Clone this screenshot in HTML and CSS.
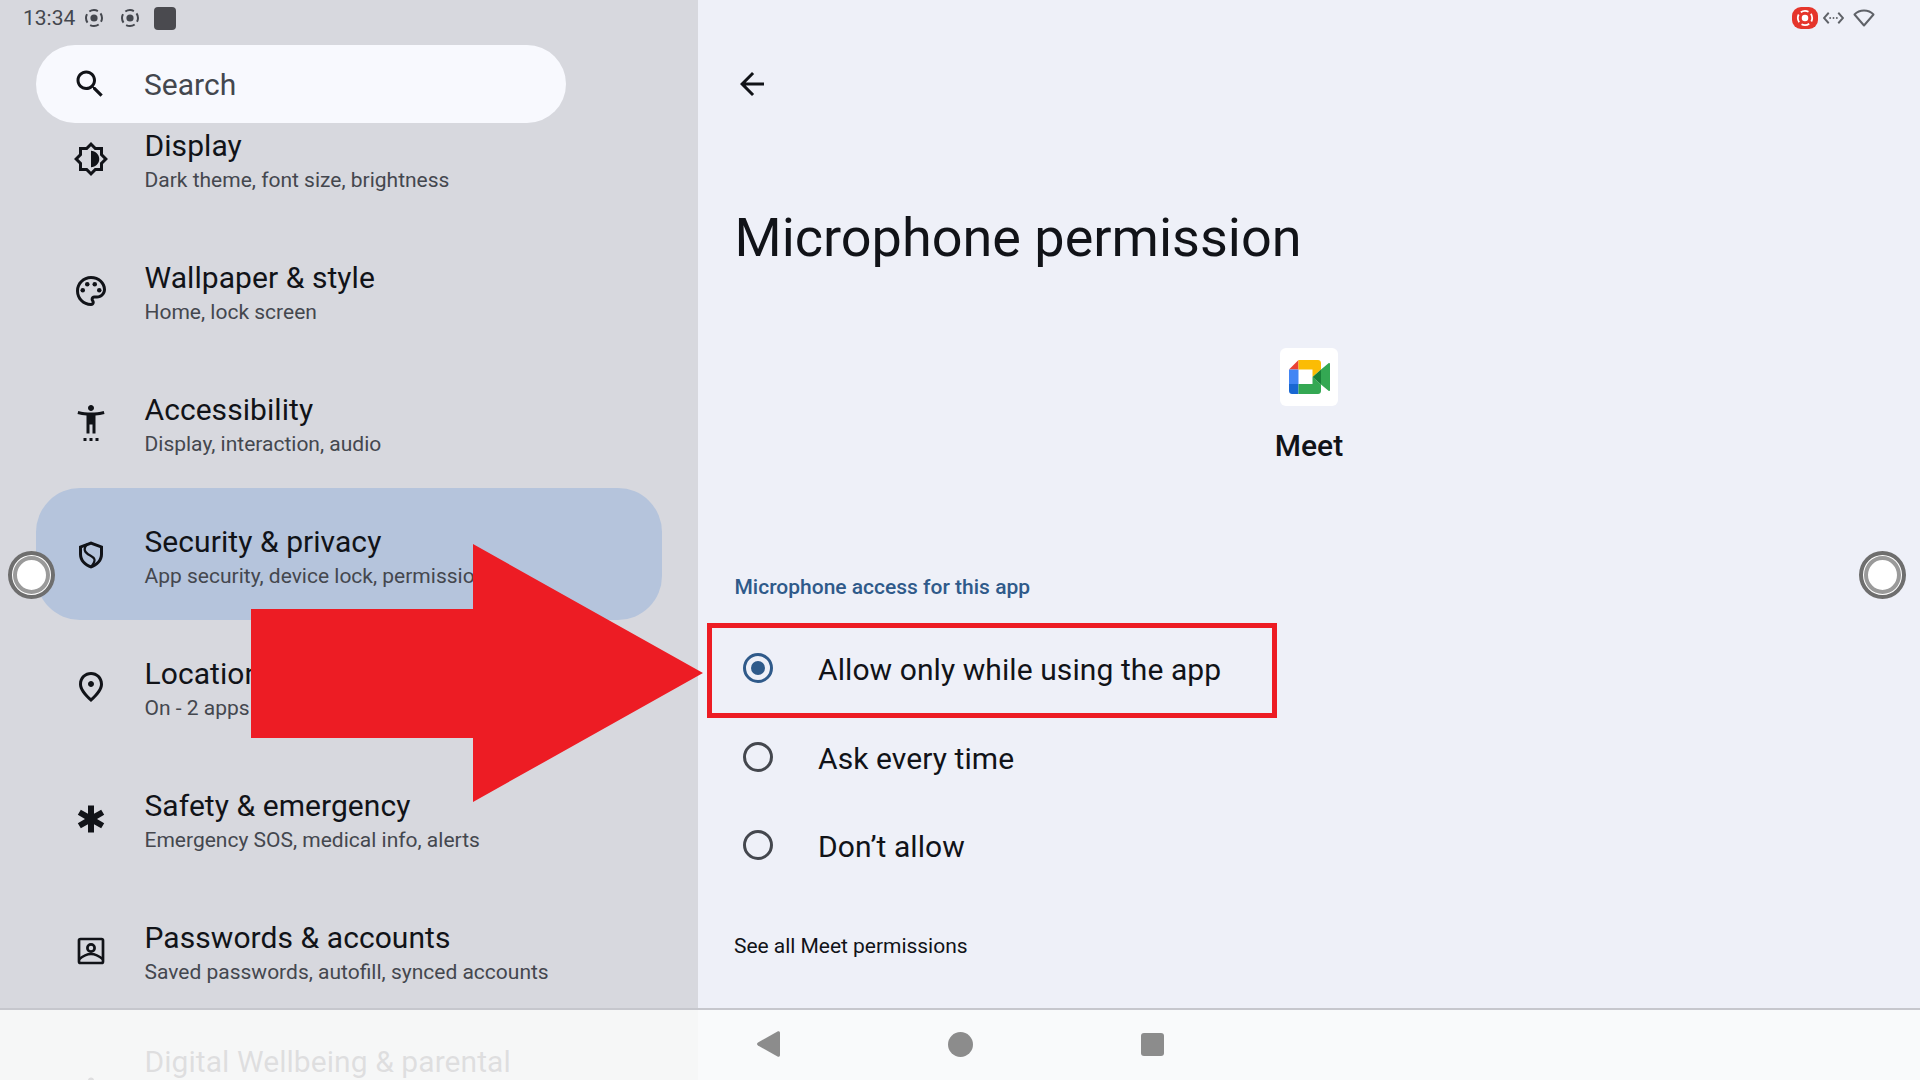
FILE: index.html
```html
<!DOCTYPE html>
<html lang="en">
<head>
    <meta charset="UTF-8">
    <title>Microphone permission</title>
    <link rel="stylesheet" href="styles.css">
</head>
<body>
<div class="screen">

    <!-- Left pane: settings list -->
    <div class="left-pane">
        <div class="status-left">
            <span class="clock">13:34</span>
            <svg class="rec-icon" viewBox="0 0 20 20"><circle cx="10" cy="10" r="3.6"/><circle class="rec-ring" cx="10" cy="10" r="8"/></svg>
            <svg class="rec-icon second" viewBox="0 0 20 20"><circle cx="10" cy="10" r="3.6"/><circle class="rec-ring" cx="10" cy="10" r="8"/></svg>
            <span class="stop-icon"></span>
        </div>

        <div class="search">
            <svg class="icon" viewBox="0 0 24 24"><path d="M15.5 14h-.79l-.28-.27C15.41 12.59 16 11.11 16 9.5 16 5.91 13.09 3 9.5 3S3 5.91 3 9.5 5.91 16 9.5 16c1.61 0 3.09-.59 4.23-1.57l.27.28v.79l5 4.99L20.49 19l-4.99-5zm-6 0C7.01 14 5 11.99 5 9.5S7.01 5 9.5 5 14 7.01 14 9.5 11.99 14 9.5 14z"/></svg>
            <span class="search-text">Search</span>
        </div>

        <div class="list">
            <div class="row">
                <svg class="icon" viewBox="0 0 24 24"><path d="M20 8.69V4h-4.69L12 .69 8.69 4H4v4.69L.69 12 4 15.31V20h4.69L12 23.31 15.31 20H20v-4.69L23.31 12 20 8.69zm-2 5.79V18h-3.52L12 20.48 9.52 18H6v-3.52L3.52 12 6 9.52V6h3.52L12 3.52 14.48 6H18v3.52L20.48 12 18 14.48zM12 6.5v11c3.03 0 5.5-2.47 5.5-5.5S15.03 6.5 12 6.5z"/></svg>
                <div class="row-text">
                    <div class="row-title">Display</div>
                    <div class="row-sub">Dark theme, font size, brightness</div>
                </div>
            </div>
            <div class="row">
                <svg class="icon" viewBox="0 0 24 24"><path d="M12 22C6.49 22 2 17.51 2 12S6.49 2 12 2s10 4.04 10 9c0 3.31-2.69 6-6 6h-1.77c-.28 0-.5.22-.5.5 0 .12.05.23.13.33.41.47.64 1.06.64 1.67 0 1.38-1.12 2.5-2.5 2.5zm0-18c-4.41 0-8 3.59-8 8s3.59 8 8 8c.28 0 .5-.22.5-.5 0-.16-.08-.28-.14-.35-.41-.46-.63-1.05-.63-1.65 0-1.38 1.12-2.5 2.5-2.5H16c2.21 0 4-1.79 4-4 0-3.86-3.59-7-8-7z"/><circle cx="6.5" cy="11.5" r="1.5"/><circle cx="9.5" cy="7.5" r="1.5"/><circle cx="14.5" cy="7.5" r="1.5"/><circle cx="17.5" cy="11.5" r="1.5"/></svg>
                <div class="row-text">
                    <div class="row-title">Wallpaper &amp; style</div>
                    <div class="row-sub">Home, lock screen</div>
                </div>
            </div>
            <div class="row">
                <svg class="icon" viewBox="0 0 24 24"><path d="M20.5 4c-2.61.7-5.67 1-8.5 1s-5.89-.3-8.5-1L3 6c1.86.5 4 .83 6 1v12h2v-6h2v6h2V7c2-.17 4.14-.5 6-1l-.5-2zM12 4c1.1 0 2-.9 2-2s-.9-2-2-2-2 .9-2 2 .9 2 2 2zM7 24h2v-2H7v2zm4 0h2v-2h-2v2zm4 0h2v-2h-2v2z"/></svg>
                <div class="row-text">
                    <div class="row-title">Accessibility</div>
                    <div class="row-sub">Display, interaction, audio</div>
                </div>
            </div>
            <div class="row selected">
                <svg class="icon" viewBox="0 0 24 24"><path d="M12 3 4 6v5.5c0 4.5 3.4 8 8 9.5 4.6-1.5 8-5 8-9.5V6l-8-3zm6 8.5c0 3.4-2.5 6-6 7.4-3.5-1.4-6-4-6-7.4V7.4l6-2.25 6 2.25v4.1z"/><path class="shield-line" d="M10 4.5C7 7 7 9.5 10 11.5c3 2 7 2.5 2 8.5"/></svg>
                <div class="row-text">
                    <div class="row-title">Security &amp; privacy</div>
                    <div class="row-sub">App security, device lock, permissions</div>
                </div>
            </div>
            <div class="row">
                <svg class="icon" viewBox="0 0 24 24"><path d="M12 12c-1.1 0-2-.9-2-2s.9-2 2-2 2 .9 2 2-.9 2-2 2zm6-1.8C18 6.57 15.35 4 12 4s-6 2.57-6 6.2c0 2.34 1.95 5.44 6 9.14 4.05-3.7 6-6.8 6-9.14zM12 2c4.2 0 8 3.22 8 8.2 0 3.32-2.67 7.25-8 11.8-5.33-4.55-8-8.48-8-11.8C4 5.22 7.8 2 12 2z"/></svg>
                <div class="row-text">
                    <div class="row-title">Location</div>
                    <div class="row-sub">On - 2 apps have access</div>
                </div>
            </div>
            <div class="row">
                <svg class="icon" viewBox="0 0 24 24"><path d="M20.79 9.23l-2-3.46L14 8.54V3h-4v5.54L5.21 5.77l-2 3.46L8 12l-4.79 2.77 2 3.46L10 15.46V21h4v-5.54l4.79 2.77 2-3.46L16 12z"/></svg>
                <div class="row-text">
                    <div class="row-title">Safety &amp; emergency</div>
                    <div class="row-sub">Emergency SOS, medical info, alerts</div>
                </div>
            </div>
            <div class="row">
                <svg class="icon icon-line" viewBox="0 0 24 24"><rect x="4" y="4" width="16" height="16" rx="1"/><circle cx="12" cy="10" r="2.4"/><path d="M4 17.5C7 15 9.5 14 12 14s5 1 8 3.5"/></svg>
                <div class="row-text">
                    <div class="row-title">Passwords &amp; accounts</div>
                    <div class="row-sub">Saved passwords, autofill, synced accounts</div>
                </div>
            </div>
            <div class="row last">
                <svg class="icon" viewBox="0 0 24 24"><circle cx="12" cy="11" r="2"/><path d="M6 21c0-4 2.7-6 6-6s6 2 6 6h-2c0-2.5-1.7-4-4-4s-4 1.5-4 4H6z"/></svg>
                <div class="row-text">
                    <div class="row-title">Digital Wellbeing &amp; parental</div>
                </div>
            </div>
        </div>
    </div>

    <!-- Right pane: permission page -->
    <div class="right-pane">
        <div class="status-right">
            <span class="rec-pill">
                <svg viewBox="0 0 20 20"><circle cx="10" cy="10" r="3.6"/><circle class="rec-ring" cx="10" cy="10" r="8"/></svg>
            </span>
            <svg class="data-icon" viewBox="0 0 22 14"><path d="M6 1.5 1 7l5 5.5M16 1.5 21 7l-5 5.5"/><circle cx="7.5" cy="7" r="1"/><circle cx="11" cy="7" r="1"/><circle cx="14.5" cy="7" r="1"/></svg>
            <svg class="wifi-icon" viewBox="0 0 22 18"><path d="M1.5 5.5C4 2.8 7.3 1.5 11 1.5s7 1.3 9.500 4L11 16.5z"/></svg>
        </div>

        <svg class="back-icon" viewBox="0 0 24 24"><path d="M20 11H7.83l5.59-5.59L12 4l-8 8 8 8 1.41-1.41L7.83 13H20v-2z"/></svg>

        <h1 class="page-title">Microphone permission</h1>

        <div class="app-info">
            <div class="app-tile">
                <svg class="meet-logo" viewBox="0 0 41 34">
                    <path fill="#ea4335" d="M9.5 0 0 9.5h9.5z"/>
                    <path fill="#4285f4" d="M0 9.5h9.5V24H0z"/>
                    <path fill="#1967d2" d="M0 24h9.5v10H3c-1.7 0-3-1.3-3-3z"/>
                    <path fill="#fbbc04" d="M9.5 0H29c1.7 0 3 1.3 3 3v6.5l-8.5 7.5V9.5h-14z"/>
                    <path fill="#34a853" d="M9.5 24h14v-7l8.5 7.5V31c0 1.7-1.3 3-3 3H9.5z"/>
                    <path fill="#188038" d="M23.5 17 32 9.5v15z"/>
                    <path fill="#34a853" d="M32 9.5 39.5 3.2c.7-.6 1.5-.2 1.5.8v26c0 1-.8 1.4-1.5.8L32 24.5z"/>
                </svg>
            </div>
            <div class="app-name">Meet</div>
        </div>

        <div class="section-label">Microphone access for this app</div>

        <div class="options">
            <div class="option">
                <span class="radio checked"></span>
                <span class="option-text">Allow only while using the app</span>
            </div>
            <div class="option">
                <span class="radio"></span>
                <span class="option-text">Ask every time</span>
            </div>
            <div class="option">
                <span class="radio"></span>
                <span class="option-text">Don’t allow</span>
            </div>
        </div>

        <div class="see-all">See all Meet permissions</div>
    </div>

    <!-- Navigation bar, lies over the list -->
    <div class="nav-bar">
        <svg class="nav-back" viewBox="0 0 23 26"><path d="M20.5.5c1.3-.7 2.5 0 2.5 1.5v22c0 1.5-1.2 2.2-2.5 1.5L1 14.5c-1.3-.8-1.3-2.2 0-3z"/></svg>
        <span class="nav-home"></span>
        <span class="nav-recent"></span>
    </div>

    <!-- Split screen handles -->
    <div class="handle handle-left"></div>
    <div class="handle handle-right"></div>

    <!-- Annotations drawn on the screenshot -->
    <svg class="arrow" viewBox="0 0 452 258"><path d="M0 65H222V0L452 129 222 258V194H0z"/></svg>
    <div class="red-box"></div>
</div>
</body>
</html>
```

FILE: styles.css
```css
* {
    margin: 0;
    padding: 0;
    box-sizing: border-box;
    font-family: 'Roboto', sans-serif;
}

body {
    width: 1920px;
    height: 1080px;
    overflow: hidden;
}

.screen {
    position: relative;
    display: flex;
    width: 1920px;
    height: 1080px;
    overflow: hidden;
    color: #111318;
}

.icon {
    flex: none;
    width: 36px;
    height: 36px;
    fill: #111318;
}

.icon-line {
    fill: none;
    stroke: #111318;
    stroke-width: 1.8;
}

/* Left pane */
.left-pane {
    flex: none;
    display: flex;
    flex-direction: column;
    width: 698px;
    height: 1080px;
    overflow: hidden;
    background-color: #d7d8de;
}

.status-left {
    flex: none;
    display: flex;
    align-items: center;
    height: 36px;
    padding-left: 23px;
    color: #44474e;
}

.clock {
    font-size: 21px;
}

.rec-icon {
    width: 20px;
    height: 20px;
    margin-left: 9px;
    fill: #44474e;
}

.rec-icon.second {
    margin-left: 16px;
}

.rec-ring {
    fill: none;
    stroke: #44474e;
    stroke-width: 2;
    stroke-dasharray: 9 3.5;
    stroke-dashoffset: 5;
}

.stop-icon {
    width: 22px;
    height: 23px;
    margin-left: 14px;
    border-radius: 4px;
    background-color: #4a4a4f;
}

.search {
    position: relative;
    z-index: 1;
    flex: none;
    display: flex;
    align-items: center;
    gap: 36px;
    width: 530px;
    height: 78px;
    margin: 9px 0 0 36px;
    padding-left: 36px;
    border-radius: 39px;
    background-color: #f8f9fe;
}

.search-text {
    font-size: 30px;
    color: #44474e;
}

.list {
    flex: none;
    margin-top: -31px;
}

.row {
    display: flex;
    align-items: center;
    gap: 36px;
    width: 626px;
    height: 132px;
    margin-left: 36px;
    padding-left: 36px;
    border-radius: 44px;
    white-space: nowrap;
}

.row > .icon {
    margin: 2px 0 0 0.5px;
}

.row-text {
    margin-top: 6px;
}

.row.selected {
    background-color: #b5c4dc;
}

/* Only the first line of this row shows above the navigation bar */
.row.last {
    height: 86px;
}

.row.last > .icon {
    align-self: flex-start;
    margin-top: 48px;
}

.shield-line {
    fill: none;
    stroke: #111318;
    stroke-width: 1.5;
}

.row-title {
    font-size: 30px;
    line-height: 36px;
    letter-spacing: 0.06px;
}

.row-sub {
    margin-top: 1px;
    font-size: 21px;
    line-height: 30px;
    color: #44474e;
}

/* Right pane */
.right-pane {
    flex: 1;
    height: 1080px;
    background-color: #eef0f8;
}

.status-right {
    display: flex;
    justify-content: flex-end;
    align-items: center;
    height: 36px;
    padding-right: 45px;
}

.rec-pill {
    display: flex;
    align-items: center;
    justify-content: center;
    width: 26px;
    height: 22px;
    border-radius: 9px;
    background-color: #e5352b;
}

.rec-pill svg {
    width: 18px;
    height: 18px;
    fill: #fff;
}

.rec-pill .rec-ring {
    stroke: #fff;
}

.data-icon {
    width: 21px;
    height: 14px;
    margin-left: 5px;
    fill: #5f6268;
    stroke: #5f6268;
}

.data-icon path {
    fill: none;
    stroke-width: 2;
}

.data-icon circle {
    stroke: none;
}

.wifi-icon {
    width: 22px;
    height: 18px;
    margin-left: 9px;
    fill: none;
    stroke: #5f6268;
    stroke-width: 2;
    stroke-linejoin: round;
}

.back-icon {
    display: block;
    width: 36px;
    height: 36px;
    margin: 30px 0 0 36px;
    fill: #111318;
}

.page-title {
    margin: 104px 0 0 36.5px;
    font-size: 54px;
    font-weight: 400;
    line-height: 64px;
}

.app-info {
    display: flex;
    flex-direction: column;
    align-items: center;
    margin-top: 78px;
}

.app-tile {
    display: flex;
    align-items: center;
    justify-content: center;
    width: 58px;
    height: 58px;
    border-radius: 6px;
    background-color: #fff;
}

.meet-logo {
    width: 41px;
    height: 34px;
}

.app-name {
    margin-top: 20px;
    font-size: 30px;
    font-weight: 500;
    line-height: 40px;
}

.section-label {
    margin: 106px 0 0 36.5px;
    font-size: 21px;
    font-weight: 500;
    line-height: 30px;
    color: #2f5a8a;
}

.options {
    margin-top: 22px;
}

.option {
    display: flex;
    align-items: center;
    gap: 45px;
    height: 88.5px;
    padding-left: 45px;
}

.radio {
    flex: none;
    position: relative;
    width: 30px;
    height: 30px;
    border: 3px solid #44474e;
    border-radius: 50%;
}

.radio.checked {
    border-color: #2f5a8a;
}

.radio.checked::after {
    content: "";
    position: absolute;
    top: 5px;
    left: 5px;
    width: 14px;
    height: 14px;
    border-radius: 50%;
    background-color: #2f5a8a;
}

.option-text {
    padding-top: 3px;
    font-size: 30px;
    letter-spacing: 0.08px;
}

.see-all {
    margin: 41px 0 0 36px;
    font-size: 21px;
    line-height: 30px;
    letter-spacing: -0.03px;
}

/* Navigation bar */
.nav-bar {
    position: absolute;
    left: 0;
    bottom: 0;
    display: flex;
    align-items: center;
    gap: 168px;
    width: 100%;
    height: 72px;
    padding: 0 0 2px 757px;
    border-top: 2px solid #c6c7cd;
    background-color: rgba(251, 251, 251, 0.88);
}

.nav-back {
    width: 23px;
    height: 26px;
    fill: #8c8c8c;
}

.nav-home {
    width: 25px;
    height: 25px;
    border-radius: 50%;
    background-color: #8c8c8c;
}

.nav-recent {
    width: 23px;
    height: 23px;
    border-radius: 3px;
    background-color: #8c8c8c;
}

/* Split screen handles */
.handle {
    position: absolute;
    top: 551px;
    width: 47px;
    height: 48px;
    border: 4px solid #6e6e6e;
    border-radius: 50%;
    background-color: #fff;
}

.handle::after {
    content: "";
    position: absolute;
    inset: 1px;
    border: 4px solid #9a9a9a;
    border-radius: 50%;
}

.handle-left {
    left: 8px;
}

.handle-right {
    left: 1859px;
}

/* Annotations */
.arrow {
    position: absolute;
    left: 251px;
    top: 544px;
    width: 452px;
    height: 258px;
    fill: #ed1c24;
}

.red-box {
    position: absolute;
    left: 707px;
    top: 623px;
    width: 570px;
    height: 95px;
    border: 5px solid #ed1c24;
}
```
